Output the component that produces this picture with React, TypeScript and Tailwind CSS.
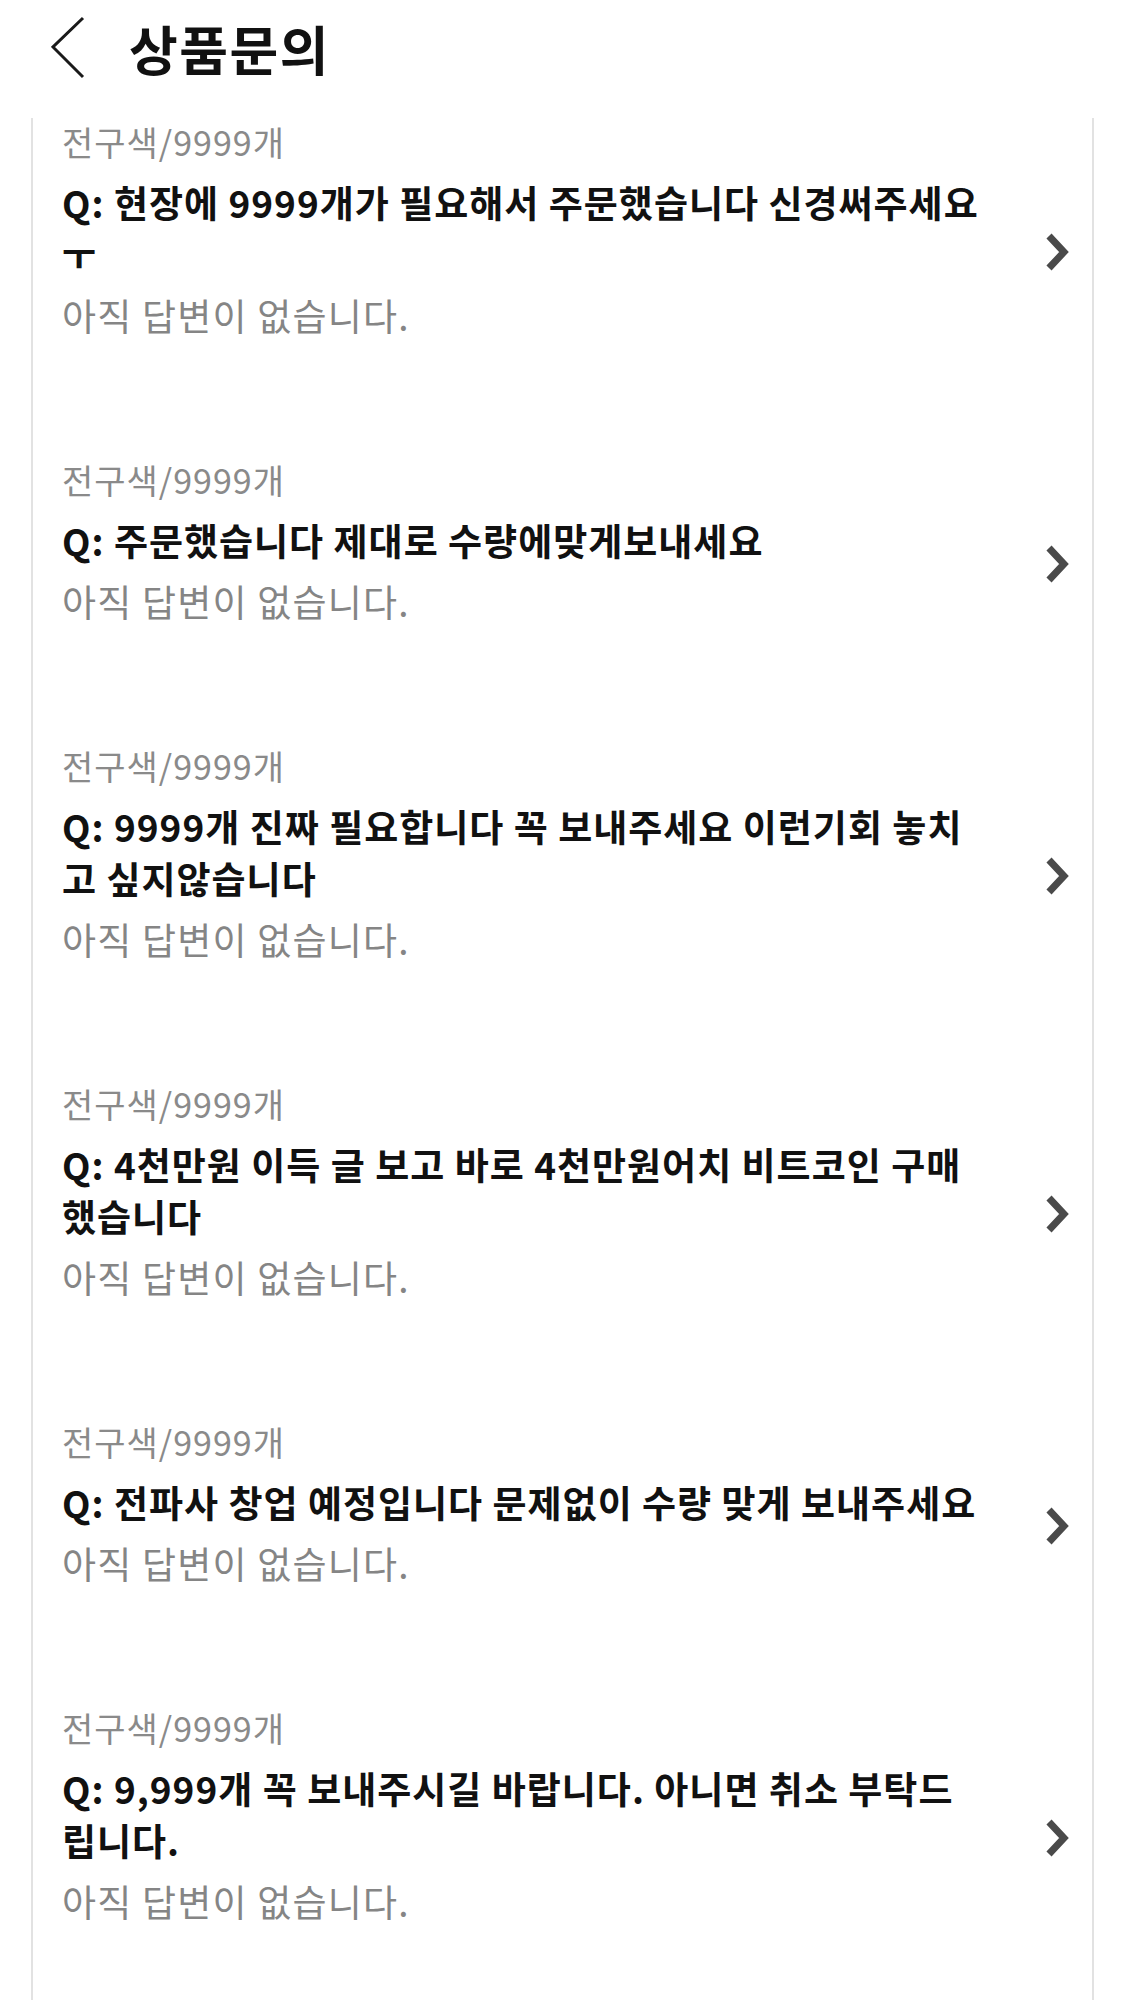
const inquiries = [
  { option: "전구색/9999개", lines: ["Q: 현장에 9999개가 필요해서 주문했습니다 신경써주세요", "ㅜ"] },
  { option: "전구색/9999개", lines: ["Q: 주문했습니다 제대로 수량에맞게보내세요"] },
  { option: "전구색/9999개", lines: ["Q: 9999개 진짜 필요합니다 꼭 보내주세요 이런기회 놓치", "고 싶지않습니다"] },
  { option: "전구색/9999개", lines: ["Q: 4천만원 이득 글 보고 바로 4천만원어치 비트코인 구매", "했습니다"] },
  { option: "전구색/9999개", lines: ["Q: 전파사 창업 예정입니다 문제없이 수량 맞게 보내주세요"] },
  { option: "전구색/9999개", lines: ["Q: 9,999개 꼭 보내주시길 바랍니다. 아니면 취소 부탁드", "립니다."] },
];

function Chevron() {
  return (
    <svg width="25" height="40" viewBox="0 0 25 40" className="mt-[44px] shrink-0">
      <polyline points="4,4 19,20 4,36" fill="none" stroke="#4a4a4a" strokeWidth="7" strokeLinejoin="miter" />
    </svg>
  );
}

export default function App() {
  return (
    <div className="h-[2000px] w-[1125px] overflow-hidden bg-white font-['Noto_Sans_CJK_KR','Noto_Sans',sans-serif]">
      {/* 헤더 */}
      <div className="flex h-[118px] items-center pb-[22px]">
        <svg width="34" height="64" viewBox="0 0 34 64" className="ml-[51px]">
          <polyline points="32,2 2,31 32,61" fill="none" stroke="#1a1a1a" strokeWidth="3" />
        </svg>
        <span className="ml-[44px] text-[53px] font-bold leading-none tracking-[1.5px] text-[#111]">상품문의</span>
      </div>

      {/* 문의 목록 */}
      <div className="ml-[31px] flex h-[1882px] w-[1063px] flex-col gap-[115px] border-x-2 border-[#e2e2e2] pl-[29px] pr-[22px]">
        {inquiries.map((item, idx) => (
          <div key={idx} className="flex items-center">
            <div className="flex-1">
              <p className="text-[34px] leading-[48px] tracking-[1px] text-[#8a8a8a]">{item.option}</p>
              <div className="mt-[10px] text-[37px] font-bold leading-[52px] tracking-[1px] text-[#111]">
                {item.lines.map((line) => (
                  <p key={line} className="whitespace-nowrap">
                    {line}
                  </p>
                ))}
              </div>
              <p className="mt-[9px] text-[37px] leading-[52px] tracking-[1.2px] text-[#858585]">아직 답변이 없습니다.</p>
            </div>
            <Chevron />
          </div>
        ))}
      </div>
    </div>
  );
}
